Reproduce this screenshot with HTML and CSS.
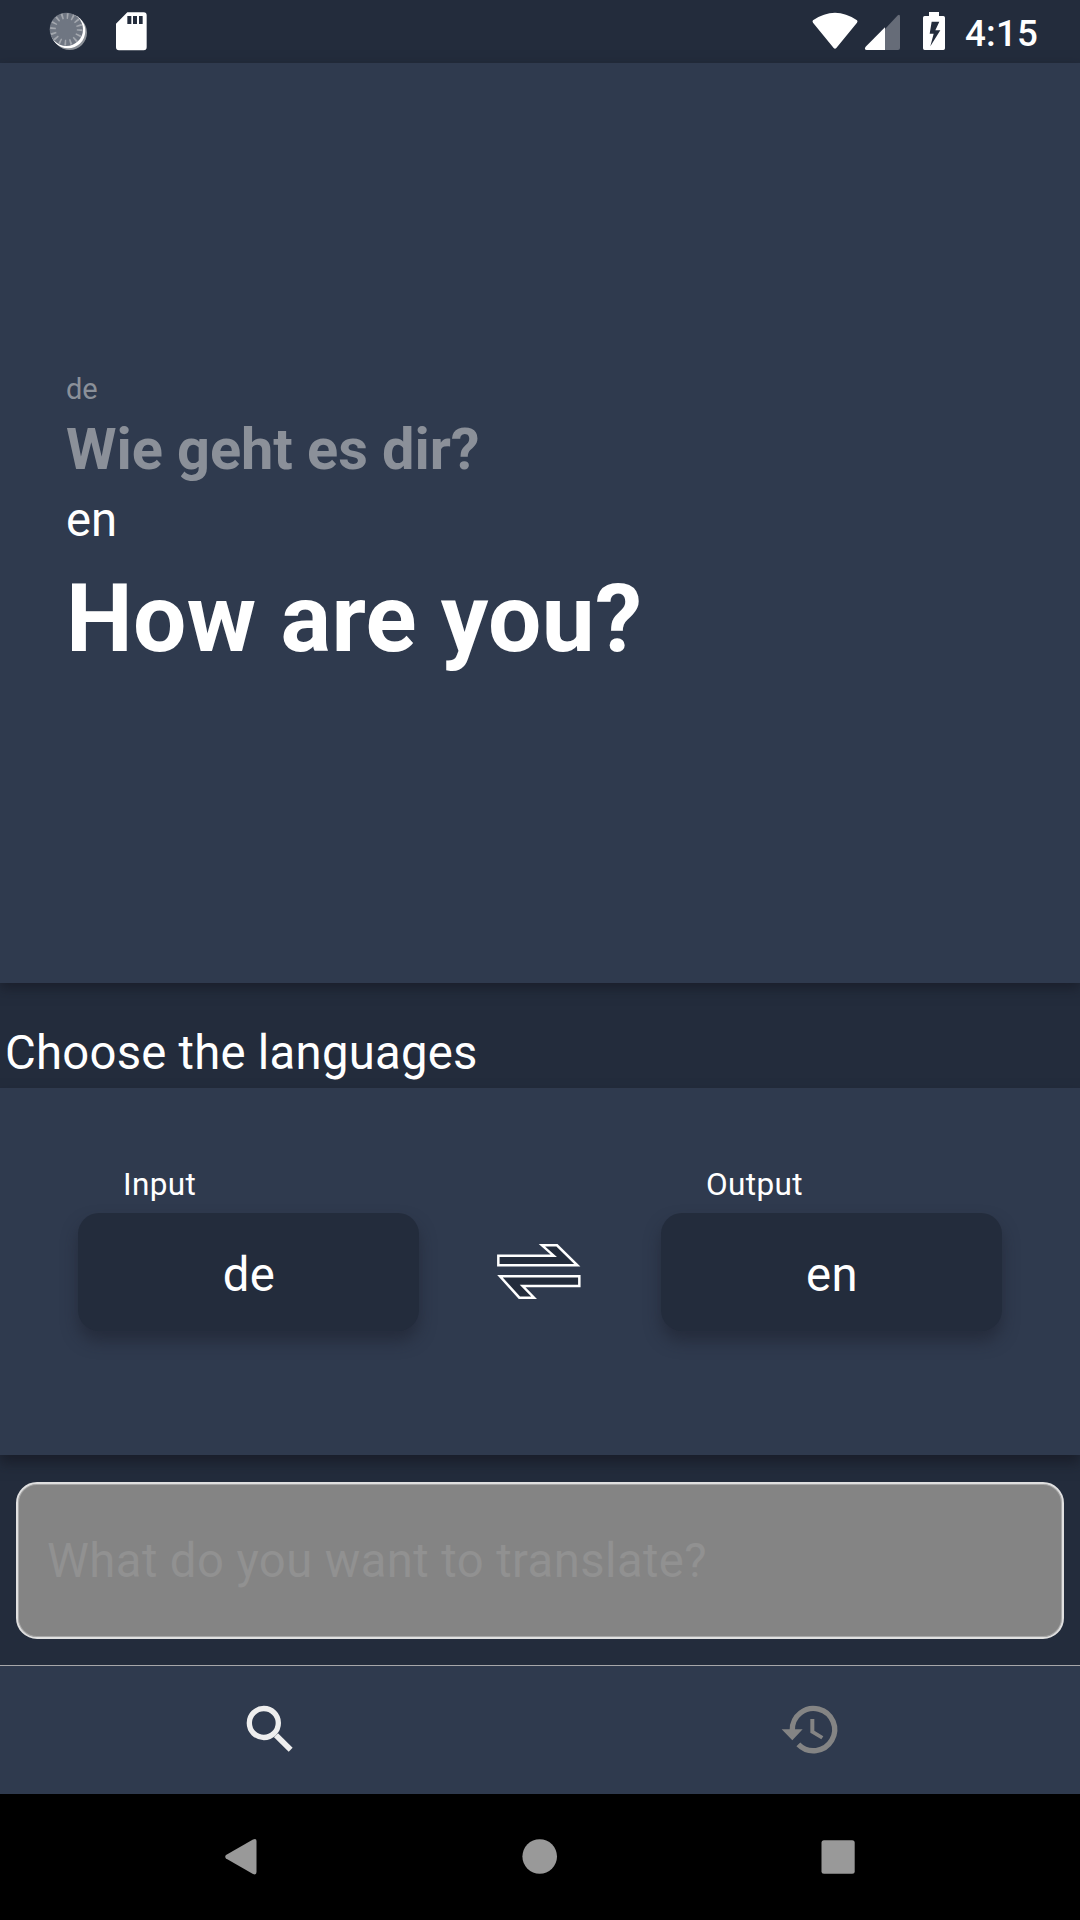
FILE: index.html
```html
<!DOCTYPE html>
<html lang="en">
<head>
<meta charset="utf-8">
<title>Translator</title>
<link rel="stylesheet" href="styles.css">
</head>
<body>
<div class="screen">
  <header class="status-bar">
    <svg class="status-left" viewBox="0 0 450 189">
      <circle cx="119" cy="98" r="52" fill="#8b9097"/>
      <circle cx="114" cy="93" r="52" fill="#fff"/>
      <circle cx="109" cy="88" r="50" fill="#6f7682"/>
      <circle cx="109" cy="88" r="40" fill="none" stroke="#a3a7ae" stroke-width="17" stroke-dasharray="5 10.708"/>
      <path fill="#fff" fill-rule="evenodd" d="M292 37H341Q350 37 350 46V142Q350 151 341 151H267Q258 151 258 142V71ZM292 48V72H304V48ZM309 48V72H321V48ZM327 48V72H338V48Z"/>
    </svg>
    <svg class="status-right" viewBox="0 0 510 189">
      <path fill="#fff" d="M69 61Q135 16 201 61Q204 64 201 68L139 144Q135 149 131 144L69 68Q66 64 69 61Z"/>
      <path fill="#666c78" d="M285 87L322 47Q330 41 330 50V144Q330 150 324 150H285Z"/>
      <path fill="#fff" d="M285 82V150H230Q221 148 227 140Z"/>
      <path fill="#fff" fill-rule="evenodd" d="M417 36H447V48H460Q465 48 465 53V145Q465 150 460 150H404Q399 150 399 145V53Q399 48 404 48H417ZM425 65L419 101H431L421 139L451 91H436L448 65Z"/>
    </svg>
    <span class="clock">4:15</span>
  </header>

  <main class="content">
    <section class="result">
      <p class="source-lang">de</p>
      <p class="source-text">Wie geht es dir?</p>
      <p class="target-lang">en</p>
      <p class="target-text">How are you?</p>
    </section>

    <h2 class="heading">Choose the languages</h2>

    <section class="languages">
      <div class="picker">
        <span class="picker-label">Input</span>
        <button class="picker-button">de</button>
      </div>
      <svg class="swap" viewBox="0 0 420 300">
        <g fill="#232c3c" stroke="#fff" stroke-width="7.500">
          <path d="M85 107H251L216 76H261L322 136H85Z"/>
          <path d="M90 169H328V198H158L192 233H148Z"/>
        </g>
      </svg>
      <div class="picker">
        <span class="picker-label">Output</span>
        <button class="picker-button">en</button>
      </div>
    </section>

    <div class="query">
      <input class="query-input" type="text" placeholder="What do you want to translate?">
    </div>
  </main>

  <nav class="tabs">
    <a class="tab">
      <svg class="tab-icon" viewBox="0 0 300 270">
        <circle cx="131.500" cy="129" r="43.500" fill="none" stroke="#eee" stroke-width="16"/>
        <path d="M168 166L212 209" stroke="#eee" stroke-width="17"/>
      </svg>
    </a>
    <a class="tab">
      <svg class="tab-icon" viewBox="0 0 300 270">
        <path d="M97 150A63.500 63.500 0 1 1 115 193" fill="none" stroke="#848484" stroke-width="16"/>
        <path fill="#848484" d="M65 148H128L97 181ZM151 117H163V152L190 169L184 178L151 158Z"/>
      </svg>
    </a>
  </nav>

  <footer class="system-nav">
    <svg viewBox="0 0 1080 126" fill="#999">
      <path d="M226 61L253 45.500Q256.500 44 256.500 47V78Q256.500 81.500 253 80L226 64.500Q224.500 62.500 226 61Z"/>
      <circle cx="539.700" cy="62.500" r="17.300"/>
      <rect x="821.500" y="46.300" width="33.200" height="33.400" rx="2.500"/>
    </svg>
  </footer>
</div>
</body>
</html>
```
FILE: styles.css
```css
* {
  box-sizing: border-box;
}

body {
  margin: 0;
  font-family: Roboto, sans-serif;
  color: #fff;
  background: #232c3c;
}

svg {
  display: block;
}

p, h2 {
  margin: 0;
}

.screen {
  width: 1080px;
  height: 1920px;
  display: flex;
  flex-direction: column;
  overflow: hidden;
}

.status-bar {
  height: 63px;
  display: flex;
  padding-left: 30px;
}

.status-left {
  width: 150px;
  height: 63px;
  margin-right: 610px;
}

.status-right {
  width: 170px;
  height: 63px;
}

.clock {
  margin-left: 5px;
  font-size: 36.75px;
  font-weight: 500;
  line-height: 68px;
  letter-spacing: 0.2px;
}

.content {
  flex: 1;
  display: flex;
  flex-direction: column;
}

.result {
  height: 920px;
  padding: 306px 66px 0;
  background: #2f3a4e;
  box-shadow: 0 5px 12px rgba(20, 22, 32, 0.6);
}

.source-lang {
  font-size: 29px;
  line-height: 40px;
  color: #8b9099;
}

.source-text {
  font-size: 57.75px;
  font-weight: 700;
  line-height: 80px;
  letter-spacing: -0.08px;
  color: #8b9099;
}

.target-lang {
  font-size: 47.25px;
  line-height: 62px;
}

.target-text {
  font-size: 94.5px;
  font-weight: 700;
  line-height: 135px;
  letter-spacing: 0.38px;
}

.heading {
  height: 105px;
  padding: 39px 0 0 5px;
  font-size: 47.25px;
  font-weight: 400;
  line-height: 62px;
  letter-spacing: 0.25px;
}

.languages {
  height: 367px;
  display: flex;
  align-items: flex-start;
  justify-content: space-between;
  padding: 77px 78px 0;
  background: #2f3a4e;
  box-shadow: 0 8px 12px rgba(20, 22, 32, 0.6);
}

.picker {
  width: 341px;
  display: flex;
  flex-direction: column;
}

.picker-label {
  height: 48px;
  padding-left: 45px;
  font-size: 31.5px;
  line-height: 40px;
  letter-spacing: 0.35px;
}

.picker-button {
  height: 118px;
  padding: 5px 0 0 1px;
  border: 0;
  border-radius: 21px;
  font: 47.25px/62px Roboto, sans-serif;
  letter-spacing: 0.4px;
  color: #fff;
  background: #232c3c;
  box-shadow: 0 10px 16px rgba(30, 33, 45, 0.55);
}

.swap {
  width: 140px;
  height: 100px;
  margin-top: 55px;
}

.query {
  flex: 1;
  padding: 27px 16px 0;
}

.query-input {
  display: block;
  width: 1048px;
  height: 157px;
  padding: 0 29px;
  border: 2px solid #e0e0e0;
  border-radius: 21px;
  font: 47.25px/62px Roboto, sans-serif;
  letter-spacing: 0.41px;
  color: #fff;
  background: #848484;
  box-shadow: inset 0 0 0 1px #a8a8a8;
}

.query-input::placeholder {
  color: #919191;
  opacity: 1;
}

.tabs {
  height: 129px;
  display: flex;
  border-top: 1px solid #a7a7aa;
  background: #2f3a4e;
}

.tab {
  flex: 1;
  display: flex;
  justify-content: center;
  padding-top: 14px;
}

.tab-icon {
  width: 100px;
  height: 90px;
}

.system-nav {
  height: 126px;
  background: #000;
}
```
